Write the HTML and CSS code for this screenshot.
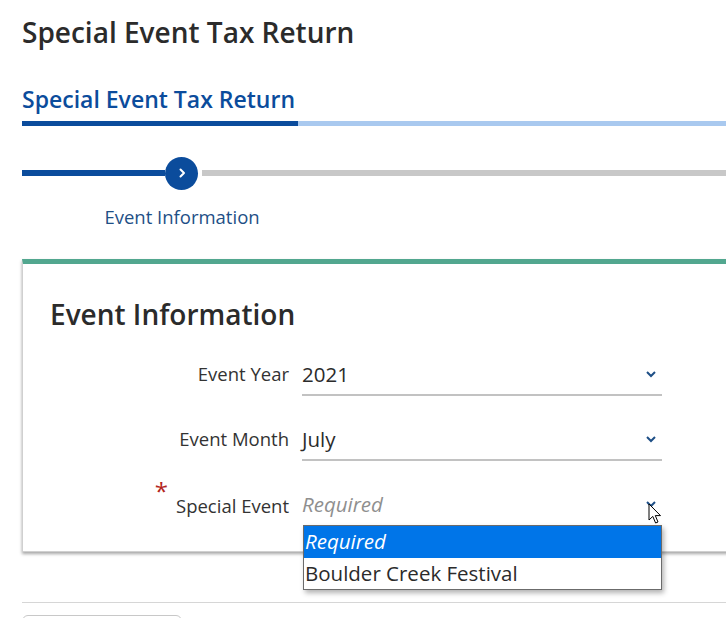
FILE: index.html
```html
<!DOCTYPE html>
<html lang="en">
<head>
<meta charset="utf-8">
<title>Special Event Tax Return</title>
<link rel="stylesheet" href="styles.css">
</head>
<body>
<div class="page">
  <h1 class="page-title">Special Event Tax Return</h1>

  <div class="tab">
    <h2 class="tab-title">Special Event Tax Return</h2>
    <div class="tab-bar"><span class="tab-bar-active"></span></div>
  </div>

  <div class="stepper">
    <div class="step-track">
      <span class="track done"></span>
      <span class="step-dot">
        <svg width="12" height="12" viewBox="0 0 12 12"><path d="M4.5 2.5 L8 6 L4.5 9.5" fill="none" stroke="#fff" stroke-width="2" stroke-linecap="round" stroke-linejoin="round"/></svg>
      </span>
      <span class="track todo"></span>
    </div>
    <div class="step-label">Event Information</div>
  </div>

  <section class="card">
    <h3 class="card-title">Event Information</h3>
    <div class="form">
      <div class="row">
        <label class="label">Event Year</label>
        <div class="field">
          <span class="value">2021</span>
          <svg class="chev" width="12" height="8" viewBox="0 0 12 8"><path d="M2 2 L6 6 L10 2" fill="none" stroke="#1e4f86" stroke-width="2"/></svg>
        </div>
      </div>
      <div class="row">
        <label class="label">Event Month</label>
        <div class="field">
          <span class="value">July</span>
          <svg class="chev" width="12" height="8" viewBox="0 0 12 8"><path d="M2 2 L6 6 L10 2" fill="none" stroke="#1e4f86" stroke-width="2"/></svg>
        </div>
      </div>
      <div class="row">
        <label class="label"><span class="req">*</span>Special Event</label>
        <div class="field open">
          <span class="value placeholder">Required</span>
          <svg class="chev" width="12" height="8" viewBox="0 0 12 8"><path d="M2 2 L6 6 L10 2" fill="none" stroke="#1e4f86" stroke-width="2"/></svg>
          <ul class="menu">
            <li class="opt selected">Required</li>
            <li class="opt">Boulder Creek Festival</li>
          </ul>
          <svg class="cursor" width="14" height="22" viewBox="0 0 14 22"><path d="M1 1 L1 17 L4.8 13.4 L7.6 20 L10 19 L7.3 12.6 L12.5 12.6 Z" fill="#fff" stroke="#000" stroke-width="1" stroke-linejoin="round"/></svg>
        </div>
      </div>
    </div>
  </section>

  <hr class="divider">
  <div class="button-row"><button class="btn" type="button"></button></div>
</div>
</body>
</html>
```

FILE: styles.css
```css
html, body {
  margin: 0;
  padding: 0;
  background: #fff;
  overflow: hidden;
}

body {
  font-family: "Open Sans", "Noto Sans", "Liberation Sans", sans-serif;
  color: #2b2b2b;
}

.page {
  padding: 12px 0 0 22px;
  width: 760px;
}

.page-title {
  margin: 0;
  font-size: 28px;
  font-weight: 600;
  line-height: 40px;
  color: #2b2b2b;
}

.tab {
  margin-top: 32px;
}

.tab-title {
  margin: 0;
  font-size: 23px;
  font-weight: 600;
  line-height: 30px;
  color: #0b4c9c;
}

.tab-bar {
  margin-top: 7px;
  height: 5px;
  background: #a9c9ef;
}

.tab-bar-active {
  display: block;
  width: 276px;
  height: 5px;
  background: #0b4c9c;
}

.stepper {
  margin-top: 30px;
}

.step-track {
  display: flex;
  align-items: center;
  height: 34px;
}

.track {
  display: block;
  height: 6px;
}

.track.done {
  width: 143px;
  background: #0b4c9c;
}

.track.todo {
  flex: 1;
  margin-left: 4px;
  background: #c8c8c8;
}

.step-dot {
  width: 33px;
  height: 33px;
  border-radius: 50%;
  background: #0b4c9c;
  display: flex;
  align-items: center;
  justify-content: center;
}

.step-label {
  width: 320px;
  text-align: center;
  margin-top: 14px;
  font-size: 18.5px;
  line-height: 26px;
  color: #1e4f86;
}

.card {
  margin-top: 29px;
  border: 1px solid #d0d0d0;
  border-top: 5px solid #52a78f;
  box-shadow: 0 2px 3px rgba(0, 0, 0, 0.35);
  height: 287px;
  padding: 0 0 0 27px;
}

.card-title {
  margin: 32px 0 0 0;
  font-size: 28px;
  font-weight: 600;
  line-height: 36px;
  color: #2b2b2b;
}

.form {
  margin-top: 22px;
}

.row {
  display: flex;
  align-items: flex-start;
  height: 65px;
}

.label {
  width: 239px;
  text-align: right;
  font-size: 18.5px;
  line-height: 40px;
  color: #333;
}

.req {
  position: relative;
  top: -13px;
  margin-right: 8px;
  color: #b3261e;
  font-size: 24px;
}

.field {
  position: relative;
  margin-left: 13px;
  width: 360px;
  height: 40px;
  border-bottom: 2px solid #c2c2c2;
  display: flex;
  align-items: center;
}

.field.open {
  border-bottom: none;
}

.value {
  flex: 1;
  font-size: 20.5px;
  line-height: 30px;
  color: #2b2b2b;
}

.placeholder {
  font-style: italic;
  color: #8f8f8f;
}

.chev {
  margin-right: 5px;
}

.menu {
  position: absolute;
  left: 1px;
  top: 41px;
  width: 357px;
  margin: 0;
  padding: 0;
  list-style: none;
  border: 1px solid #6b6b6b;
  background: #fff;
  box-shadow: 2px 3px 5px rgba(0, 0, 0, 0.3);
  z-index: 2;
}

.opt {
  font-size: 20.5px;
  line-height: 31.5px;
  padding-left: 1px;
  color: #2b2b2b;
}

.opt.selected {
  background: #0075e8;
  color: #fff;
  font-style: italic;
}

.cursor {
  position: absolute;
  left: 346px;
  top: 19px;
  z-index: 3;
}

.divider {
  margin: 50px 0 0 0;
  border: none;
  border-top: 1px solid #d6d6d6;
  height: 0;
}

.button-row {
  margin-top: 12px;
}

.btn {
  display: block;
  width: 160px;
  height: 40px;
  border: 1px solid #c8c8c8;
  border-radius: 6px;
  background: #fff;
}
```
